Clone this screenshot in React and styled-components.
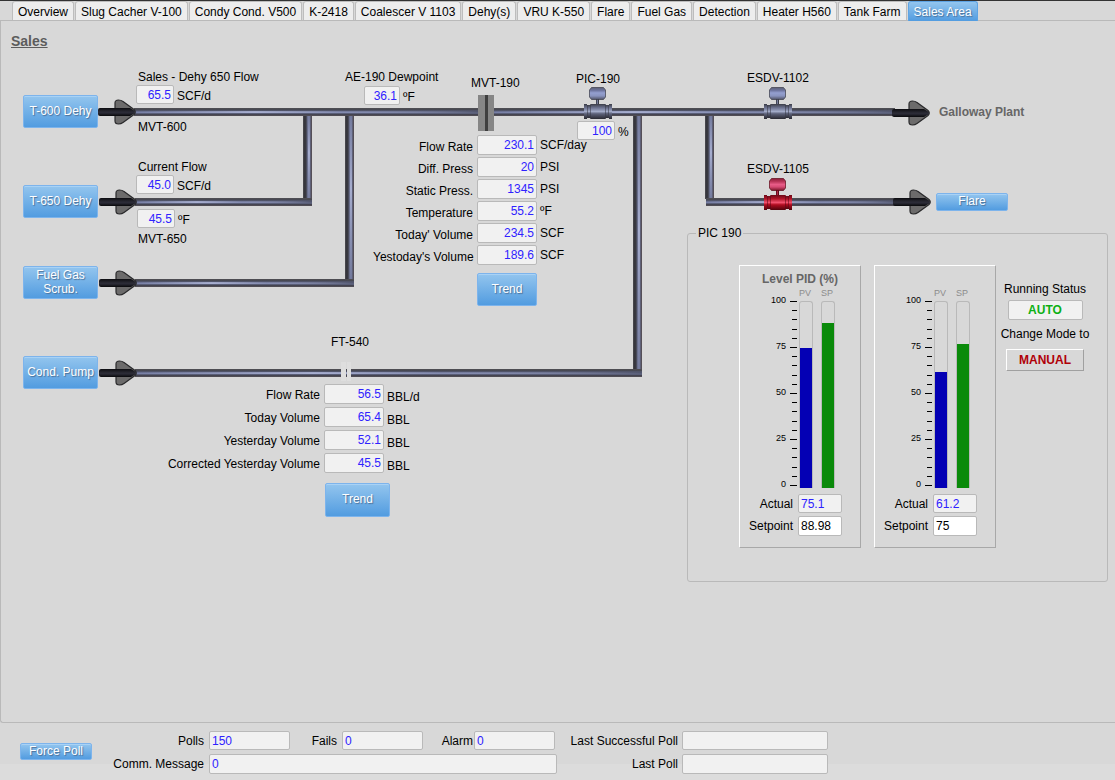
import React, { useId } from "react";
import styled, { createGlobalStyle, css } from "styled-components";

const GlobalStyle = createGlobalStyle`
  *, *::before, *::after { box-sizing: border-box; }
  body {
    margin: 0;
    background: #d8d8d8;
    color: #000;
    font: 12px/14px "Liberation Sans", Arial, sans-serif;
  }
  button, input { font: inherit; margin: 0; }
`;

/* ---------- shared parts ---------- */

const Page = styled.div`
  display: flex;
  flex-direction: column;
  min-height: 100vh;
`;

const blueFace = css`
  background: linear-gradient(#93c5ee, #529ce0);
  color: #fff;
  text-shadow: 1px 1px 1px #4a6f96;
`;

const BlueButton = styled.button`
  ${blueFace}
  width: ${(p) => p.$w}px;
  height: ${(p) => p.$h}px;
  padding: 0 0 2px;
  border: 1px solid #7db4ec;
  border-radius: 2px;
  box-shadow: inset 0 1px 0 #a9d2f5;
  line-height: 14px;
  text-align: center;
  cursor: pointer;
`;

const Field = styled.input`
  flex: none;
  width: ${(p) => (p.$w ? `${p.$w}px` : "100%")};
  height: ${(p) => p.$h || 19}px;
  padding: 0 2px;
  border: 1px solid #b9b9b9;
  border-radius: 2px;
  background: ${(p) => (p.readOnly ? "#f1f1f1" : "#fff")};
  color: ${(p) => (p.readOnly ? "#2f22ff" : "#000")};
  text-align: ${(p) => p.$align || "left"};
  outline: none;
`;

/* ---------- tabs ---------- */

const TabBar = styled.nav`
  display: flex;
  gap: 1px;
  height: 21px;
  padding-left: 12px;
  border-top: 1px solid #333;
  border-bottom: 1px solid #b9b9b9;
`;

const Tab = styled.button`
  flex: none;
  height: 19px;
  padding: 2px 5px 0;
  border: 1px solid #bdbdbd;
  border-bottom: 0;
  border-radius: 3px 3px 0 0;
  background: #ededed;
  color: #000;
  line-height: 14px;
  white-space: nowrap;
  cursor: pointer;
  ${(p) =>
    p.$active &&
    css`
      ${blueFace}
      height: 20px;
      padding-bottom: 1px;
      border-color: #5ea4e4;
    `}
`;

const TABS = [
  "Overview", "Slug Cacher V-100", "Condy Cond. V500", "K-2418", "Coalescer V 1103",
  "Dehy(s)", "VRU K-550", "Flare", "Fuel Gas", "Detection", "Heater H560",
  "Tank Farm", "Sales Area",
];

/* ---------- process sheet ---------- */

const Sheet = styled.main`
  flex: 1;
  display: grid;
  grid-template-columns: 686px 1fr;
  grid-template-rows: 205px auto 1fr;
  min-height: 580px;
  border: solid #b9b9b9;
  border-width: 0 0 1px 1px;
  border-radius: 0 0 0 3px;
`;

const Diagram = styled.section`
  position: relative;
  grid-area: 1 / 1 / -1 / -1;
`;

/* Sheet coordinates count the tab strip and the left border. */
const ORIGIN = { x: 1, y: 21 };

const Node = styled.div`
  position: absolute;
  left: ${(p) => p.$x - ORIGIN.x}px;
  top: ${(p) => p.$y - ORIGIN.y}px;
  white-space: nowrap;
`;

const Drawing = styled.svg`
  display: block;
`;

const Heading = styled.h1`
  margin: 0;
  color: #5c5c5c;
  font-size: 14px;
  line-height: 16px;
  text-decoration: underline;
`;

const Destination = styled.strong`
  color: #666;
`;

const ReadingRow = styled.div`
  display: flex;
  align-items: center;
  gap: 3px;
`;

const Unit = styled.span`
  padding-top: 2px;
`;

function Reading({ x, y, label, value, unit, w = 38 }) {
  return (
    <Node $x={x} $y={y}>
      <ReadingRow>
        <Field $w={w} $align="right" readOnly value={value} aria-label={label} />
        <Unit>{unit}</Unit>
      </ReadingRow>
    </Node>
  );
}

const Readings = styled.div`
  display: grid;
  grid-template-columns: ${(p) => p.$labels}px 60px auto;
  column-gap: 3px;
  row-gap: ${(p) => p.$gap}px;
`;

const ReadingsLabel = styled.label`
  padding: ${(p) => p.$drop}px 1px 0 0;
  text-align: right;
`;

const ReadingsUnit = styled.span`
  padding-top: ${(p) => p.$drop}px;
`;

function ReadingsTable({ labels, gap, labelDrop, unitDrop, rows }) {
  const id = useId();
  return (
    <Readings $labels={labels} $gap={gap}>
      {rows.map(([label, value, unit], i) => (
        <React.Fragment key={label}>
          <ReadingsLabel $drop={labelDrop} htmlFor={`${id}${i}`}>{label}</ReadingsLabel>
          <Field id={`${id}${i}`} $w={60} $h={20} $align="right" readOnly value={value} />
          <ReadingsUnit $drop={unitDrop}>{unit}</ReadingsUnit>
        </React.Fragment>
      ))}
    </Readings>
  );
}

const PIPE_STRIPES = [
  [0, "#55545a"], [0.14, "#45454b"], [0.3, "#4e5164"], [0.46, "#6a7194"],
  [0.58, "#7880a6"], [0.7, "#565a72"], [0.84, "#403f48"], [1, "#5a555c"],
];

function Gradient({ id, stops, vertical }) {
  return (
    <linearGradient id={id} x1="0" y1="0" x2={vertical ? 0 : 1} y2={vertical ? 1 : 0}>
      {stops.map(([o, c, a = 1]) => (
        <stop key={o} offset={o} stopColor={c} stopOpacity={a} />
      ))}
    </linearGradient>
  );
}

function HPipe({ x1, x2, y }) {
  return (
    <g>
      <rect x={x1} y={y} width={x2 - x1} height="8" fill="url(#pipeH)" />
      <rect x={x1} y={y + 3} width={x2 - x1} height="2" fill="url(#shineH)" />
    </g>
  );
}

function VPipe({ x, y1, y2 }) {
  return (
    <g>
      <rect x={x} y={y1} width="9" height={y2 - y1} fill="url(#pipeV)" />
      <rect x={x + 5} y={y1} width="2" height={y2 - y1} fill="url(#shineV)" />
    </g>
  );
}

function Arrow({ x, y }) {
  return (
    <g transform={`translate(${x} ${y})`}>
      <path
        d="M17 -4 L17 -9 Q17 -12 20.500 -12 Q23 -12 25 -10.500 L36 -2.500 Q38.500 0 36 2.500 L25 10.500 Q23 12 20.500 12 Q17 12 17 9 V4 Z"
        fill="#6c6b6b" stroke="#29292b" strokeWidth="1.2"
      />
      <path d="M2 -4 H32 L36 -1.500 Q38 0 36 1.500 L32 4 H2 Q0 4 0 2 V-2 Q0 -4 2 -4Z" fill="url(#shaft)" />
    </g>
  );
}

function Valve({ x, y, tone }) {
  const dark = tone === "red" ? "#5c0a18" : "#3a3c48";
  return (
    <g transform={`translate(${x} ${y})`}>
      <rect x="12" y="12" width="3" height="6" fill={dark} />
      <rect x="12.800" y="12" width="1.2" height="6" fill={tone === "red" ? "#b02a48" : "#767c9a"} />
      <path
        d="M7.500 .5 H19.500 L21.500 3 V10 L19.500 12.500 H7.500 L5.500 10 V3 Z"
        fill={`url(#${tone}Bulb)`} stroke={dark} strokeOpacity=".7"
      />
      <rect x="6" y="17" width="16" height="15" rx="1" fill={`url(#${tone}Body)`} />
      <rect x="2" y="18" width="5" height="13" fill={`url(#${tone}Body)`} />
      <rect x="21" y="18" width="5" height="13" fill={`url(#${tone}Body)`} />
      <rect x="0" y="17" width="3" height="15" fill={`url(#${tone}Body)`} />
      <rect x="25" y="17" width="3" height="15" fill={`url(#${tone}Body)`} />
      <path d="M3.500 18 V31 M6.500 18 V31 M21.500 18 V31 M24.500 18 V31" stroke={dark} strokeOpacity=".55" />
    </g>
  );
}

function Piping() {
  return (
    <Drawing
      width="1100" height="520" aria-hidden="true"
      viewBox={`${ORIGIN.x} ${ORIGIN.y} 1100 520`}
    >
      <defs>
        <Gradient id="pipeH" vertical stops={PIPE_STRIPES} />
        <Gradient
          id="pipeV"
          stops={[[0, "#55545a"], [0.12, "#35353b"], [0.34, "#3a3a42"], [0.48, "#666b88"], [0.66, "#7880a6"], [0.8, "#6a6f8c"], [0.9, "#4a4650"], [1, "#625a60"]]}
        />
        <Gradient id="shineH" stops={[[0, "#c9d0f0", 0], [0.35, "#c9d0f0", 0.6], [0.6, "#c9d0f0", 0.15], [1, "#3c3e4c", 0.5]]} />
        <Gradient id="shineV" vertical stops={[[0, "#c9d0f0", 0], [0.45, "#c9d0f0", 0.6], [0.7, "#c9d0f0", 0.3], [1, "#c9d0f0", 0]]} />
        <Gradient id="shaft" vertical stops={[[0, "#0c0c10"], [0.4, "#26262f"], [0.6, "#2c2c38"], [1, "#08080a"]]} />
        <Gradient id="steelBulb" vertical stops={[[0, "#5b6076"], [0.25, "#6f76a0"], [0.45, "#949fd0"], [0.7, "#8a94c0"], [1, "#4f5266"]]} />
        <Gradient id="steelBody" vertical stops={[[0, "#3c3e48"], [0.25, "#6c7290"], [0.5, "#a2abc8"], [0.65, "#5d627a"], [1, "#2a2a32"]]} />
        <Gradient id="redBulb" vertical stops={[[0, "#8c1c38"], [0.25, "#b83458"], [0.5, "#e85c88"], [0.7, "#d64a74"], [1, "#781428"]]} />
        <Gradient id="redBody" vertical stops={[[0, "#6c0a18"], [0.25, "#b01428"], [0.5, "#f0506c"], [0.65, "#b00c20"], [1, "#50040c"]]} />
      </defs>

      <VPipe x={303} y1={115} y2={199} />
      <VPipe x={345} y1={115} y2={280} />
      <VPipe x={633} y1={115} y2={370} />
      <VPipe x={705} y1={115} y2={199} />
      <HPipe x1={134} x2={480} y={108} />
      <HPipe x1={492} x2={895} y={108} />
      <HPipe x1={135} x2={312} y={198} />
      <HPipe x1={706} x2={895} y={198} />
      <HPipe x1={135} x2={354} y={279} />
      <HPipe x1={135} x2={642} y={369} />

      <rect x="341" y="362" width="5" height="19" fill="#dedede" />
      <rect x="347" y="362" width="4" height="19" fill="#dedede" />

      <rect x="478" y="95" width="16" height="36" fill="#868686" />
      <rect x="485" y="95" width="3" height="36" fill="#3f3f3f" />

      <Arrow x={98} y={112} />
      <Arrow x={99} y={202} />
      <Arrow x={99} y={283} />
      <Arrow x={99} y={373} />
      <Arrow x={892} y={113} />
      <Arrow x={893} y={202} />

      <Valve x={584} y={87} tone="steel" />
      <Valve x={764} y={87} tone="steel" />
      <Valve x={764} y={178} tone="red" />
    </Drawing>
  );
}

/* ---------- controller panel ---------- */

const Controller = styled.fieldset`
  grid-area: 2 / 2;
  position: relative;
  display: flex;
  min-width: 0;
  margin: 0 7px 0 0;
  padding: 25px 0 33px 51px;
  border: 1px solid #b9b9b9;
  border-radius: 3px;
`;

const Legend = styled.legend`
  margin-left: -43px;
  padding: 0 2px;
`;

const Loop = styled.section`
  flex: none;
  width: 122px;
  margin-right: 13px;
  padding: 6px 0 11px;
  border: 1px solid;
  border-color: #fff #a8a8a8 #a8a8a8 #fff;
`;

const LoopTitle = styled.h2`
  min-height: 14px;
  margin: 0 0 2px;
  color: #666;
  font-size: 12px;
  line-height: 14px;
  text-align: center;
`;

const Gauge = styled.div`
  display: grid;
  grid-template-columns: 59px 22px 14px;
  grid-template-rows: 13px 187px;
`;

const GaugeHead = styled.span`
  color: #8c8c8c;
  font-size: 9px;
  line-height: 10px;
`;

const Scale = styled.svg`
  overflow: visible;
  font-size: 9px;
`;

const Meter = styled.div`
  display: flex;
  align-items: flex-end;
  width: 14px;
  height: 187px;
  border: 1px solid #b9b9b9;
  border-bottom: 0;
  border-radius: 3px 3px 0 0;
`;

const MeterFill = styled.div`
  flex: 1;
  background: ${(p) => p.$color};
`;

const LoopFields = styled.div`
  display: grid;
  grid-template-columns: 53px 44px;
  gap: 3px 5px;
  margin-top: 6px;
`;

const LoopLabel = styled.label`
  padding-top: 3px;
  text-align: right;
`;

function LoopPanel({ title, pv, sp, actual, setpoint }) {
  const id = useId();
  const ticks = Array.from({ length: 21 }, (_, i) => i);
  return (
    <Loop>
      <LoopTitle as={title ? "h2" : "div"}>{title}</LoopTitle>
      <Gauge>
        <span />
        <GaugeHead>PV</GaugeHead>
        <GaugeHead>SP</GaugeHead>
        <Scale width="59" height="187">
          {ticks.map((i) => {
            const y = Math.round(i * 9.2);
            return <rect key={i} x={i % 5 ? 52 : 50} y={y} width={i % 5 ? 5 : 7} height="1" />;
          })}
          {[100, 75, 50, 25, 0].map((n, i) => (
            <text key={n} x="46" y={i * 46 + 2} textAnchor="end">{n}</text>
          ))}
        </Scale>
        <Meter><MeterFill $color="#0400b4" style={{ height: `${pv}%` }} /></Meter>
        <Meter><MeterFill $color="#0a8a0a" style={{ height: `${sp}%` }} /></Meter>
      </Gauge>
      <LoopFields>
        <LoopLabel htmlFor={`${id}a`}>Actual</LoopLabel>
        <Field id={`${id}a`} readOnly value={actual} />
        <LoopLabel htmlFor={`${id}s`}>Setpoint</LoopLabel>
        <Field id={`${id}s`} $h={20} defaultValue={setpoint} />
      </LoopFields>
    </Loop>
  );
}

const Mode = styled.div`
  display: flex;
  flex-direction: column;
  align-items: center;
  gap: 7px;
  width: 90px;
  margin-left: -9px;
  padding-top: 17px;
  white-space: nowrap;
`;

const ModeGroup = styled.div`
  display: flex;
  flex-direction: column;
  align-items: center;
  gap: ${(p) => p.$gap}px;
`;

const Status = styled.output`
  width: 75px;
  height: 20px;
  border: 1px solid #b9b9b9;
  border-radius: 2px;
  background: #f1f1f1;
  color: #0cb014;
  font-weight: bold;
  line-height: 18px;
  text-align: center;
`;

const ModeButton = styled.button`
  width: 78px;
  height: 22px;
  padding: 0;
  border: 1px solid;
  border-color: #fff #a0a0a0 #a0a0a0 #fff;
  background: #d8d8d8;
  color: #b00008;
  font-weight: bold;
  cursor: pointer;
`;

/* ---------- footer ---------- */

const Footer = styled.footer`
  display: flex;
  align-items: flex-start;
  height: 57px;
  padding: 8px 0 0 20px;
  background: linear-gradient(#d8d8d8 41px, #dcdcdc 41px);
`;

const PollAction = styled.div`
  display: flex;
  padding-top: 12px;
`;

const PollForm = styled.div`
  display: grid;
  grid-template-columns: 117px 81px 52px 81px 51px 81px 2px 125px 146px;
  row-gap: 4px;
`;

const PollLabel = styled.label`
  grid-column: ${(p) => p.$col};
  padding: 3px ${(p) => p.$space || 5}px 0 0;
  text-align: right;
`;

const PollCell = styled.div`
  display: flex;
  grid-column: ${(p) => p.$span};
`;

export default function App() {
  return (
    <>
      <GlobalStyle />
      <Page>
        <TabBar>
          {TABS.map((t) => (
            <Tab key={t} type="button" $active={t === "Sales Area"}>{t}</Tab>
          ))}
        </TabBar>

        <Sheet>
          <Diagram>
            <Piping />
            <Node $x={11} $y={33}><Heading>Sales</Heading></Node>

            <Node $x={23} $y={95}><BlueButton $w={75} $h={33}>T-600 Dehy</BlueButton></Node>
            <Node $x={23} $y={185}><BlueButton $w={75} $h={33}>T-650 Dehy</BlueButton></Node>
            <Node $x={23} $y={266}><BlueButton $w={75} $h={33}>Fuel Gas<br />Scrub.</BlueButton></Node>
            <Node $x={23} $y={356}><BlueButton $w={75} $h={33}>Cond. Pump</BlueButton></Node>
            <Node $x={936} $y={193}><BlueButton $w={72} $h={18}>Flare</BlueButton></Node>
            <Node $x={939} $y={105}><Destination>Galloway Plant</Destination></Node>

            <Node $x={138} $y={70}>Sales - Dehy 650 Flow</Node>
            <Reading x={136} y={85} label="Sales flow" value="65.5" unit="SCF/d" />
            <Node $x={138} $y={120}>MVT-600</Node>

            <Node $x={138} $y={160}>Current Flow</Node>
            <Reading x={136} y={175} label="Current flow" value="45.0" unit="SCF/d" />
            <Reading x={137} y={209} label="MVT-650 temperature" value="45.5" unit="ºF" />
            <Node $x={138} $y={232}>MVT-650</Node>

            <Node $x={345} $y={70}>AE-190 Dewpoint</Node>
            <Reading x={364} y={86} w={36} label="AE-190 dewpoint" value="36.1" unit="ºF" />

            <Node $x={471} $y={76}>MVT-190</Node>
            <Node $x={373} $y={135}>
              <ReadingsTable
                labels={101} gap={2} labelDrop={5} unitDrop={3}
                rows={[
                  ["Flow Rate", "230.1", "SCF/day"],
                  ["Diff. Press", "20", "PSI"],
                  ["Static Press.", "1345", "PSI"],
                  ["Temperature", "55.2", "ºF"],
                  ["Today' Volume", "234.5", "SCF"],
                  ["Yestoday's Volume", "189.6", "SCF"],
                ]}
              />
            </Node>
            <Node $x={477} $y={273}><BlueButton $w={60} $h={33}>Trend</BlueButton></Node>

            <Node $x={576} $y={72}>PIC-190</Node>
            <Reading x={577} y={121} label="PIC-190 opening" value="100" unit="%" />
            <Node $x={747} $y={71}>ESDV-1102</Node>
            <Node $x={747} $y={162}>ESDV-1105</Node>

            <Node $x={331} $y={335}>FT-540</Node>
            <Node $x={160} $y={384}>
              <ReadingsTable
                labels={161} gap={3} labelDrop={4} unitDrop={6}
                rows={[
                  ["Flow Rate", "56.5", "BBL/d"],
                  ["Today Volume", "65.4", "BBL"],
                  ["Yesterday Volume", "52.1", "BBL"],
                  ["Corrected Yesterday Volume", "45.5", "BBL"],
                ]}
              />
            </Node>
            <Node $x={325} $y={483}><BlueButton $w={65} $h={34}>Trend</BlueButton></Node>
          </Diagram>

          <Controller>
            <Legend>PIC 190</Legend>
            <LoopPanel title="Level PID (%)" pv={75.1} sp={88.5} actual="75.1" setpoint="88.98" />
            <LoopPanel pv={62.5} sp={77.5} actual="61.2" setpoint="75" />
            <Mode>
              <ModeGroup $gap={4}>
                <span id="running">Running Status</span>
                <Status aria-labelledby="running">AUTO</Status>
              </ModeGroup>
              <ModeGroup $gap={8}>
                <span>Change Mode to</span>
                <ModeButton type="button">MANUAL</ModeButton>
              </ModeGroup>
            </Mode>
          </Controller>
        </Sheet>

        <Footer>
          <PollAction><BlueButton $w={72} $h={17}>Force Poll</BlueButton></PollAction>
          <PollForm>
            <PollLabel $col={1} htmlFor="polls">Polls</PollLabel>
            <Field id="polls" readOnly value="150" />
            <PollLabel $col={3} htmlFor="fails">Fails</PollLabel>
            <Field id="fails" readOnly value="0" />
            <PollLabel $col={5} $space={1} htmlFor="alarm">Alarm</PollLabel>
            <Field id="alarm" readOnly value="0" />
            <PollLabel $col={8} $space={4} htmlFor="lastok">Last Successful Poll</PollLabel>
            <Field id="lastok" readOnly value="" />
            <PollLabel $col={1} htmlFor="comm">Comm. Message</PollLabel>
            <PollCell $span="2 / 8"><Field id="comm" $h={20} readOnly value="0" /></PollCell>
            <PollLabel $col={8} $space={4} htmlFor="last">Last Poll</PollLabel>
            <Field id="last" $h={20} readOnly value="" />
          </PollForm>
        </Footer>
      </Page>
    </>
  );
}
